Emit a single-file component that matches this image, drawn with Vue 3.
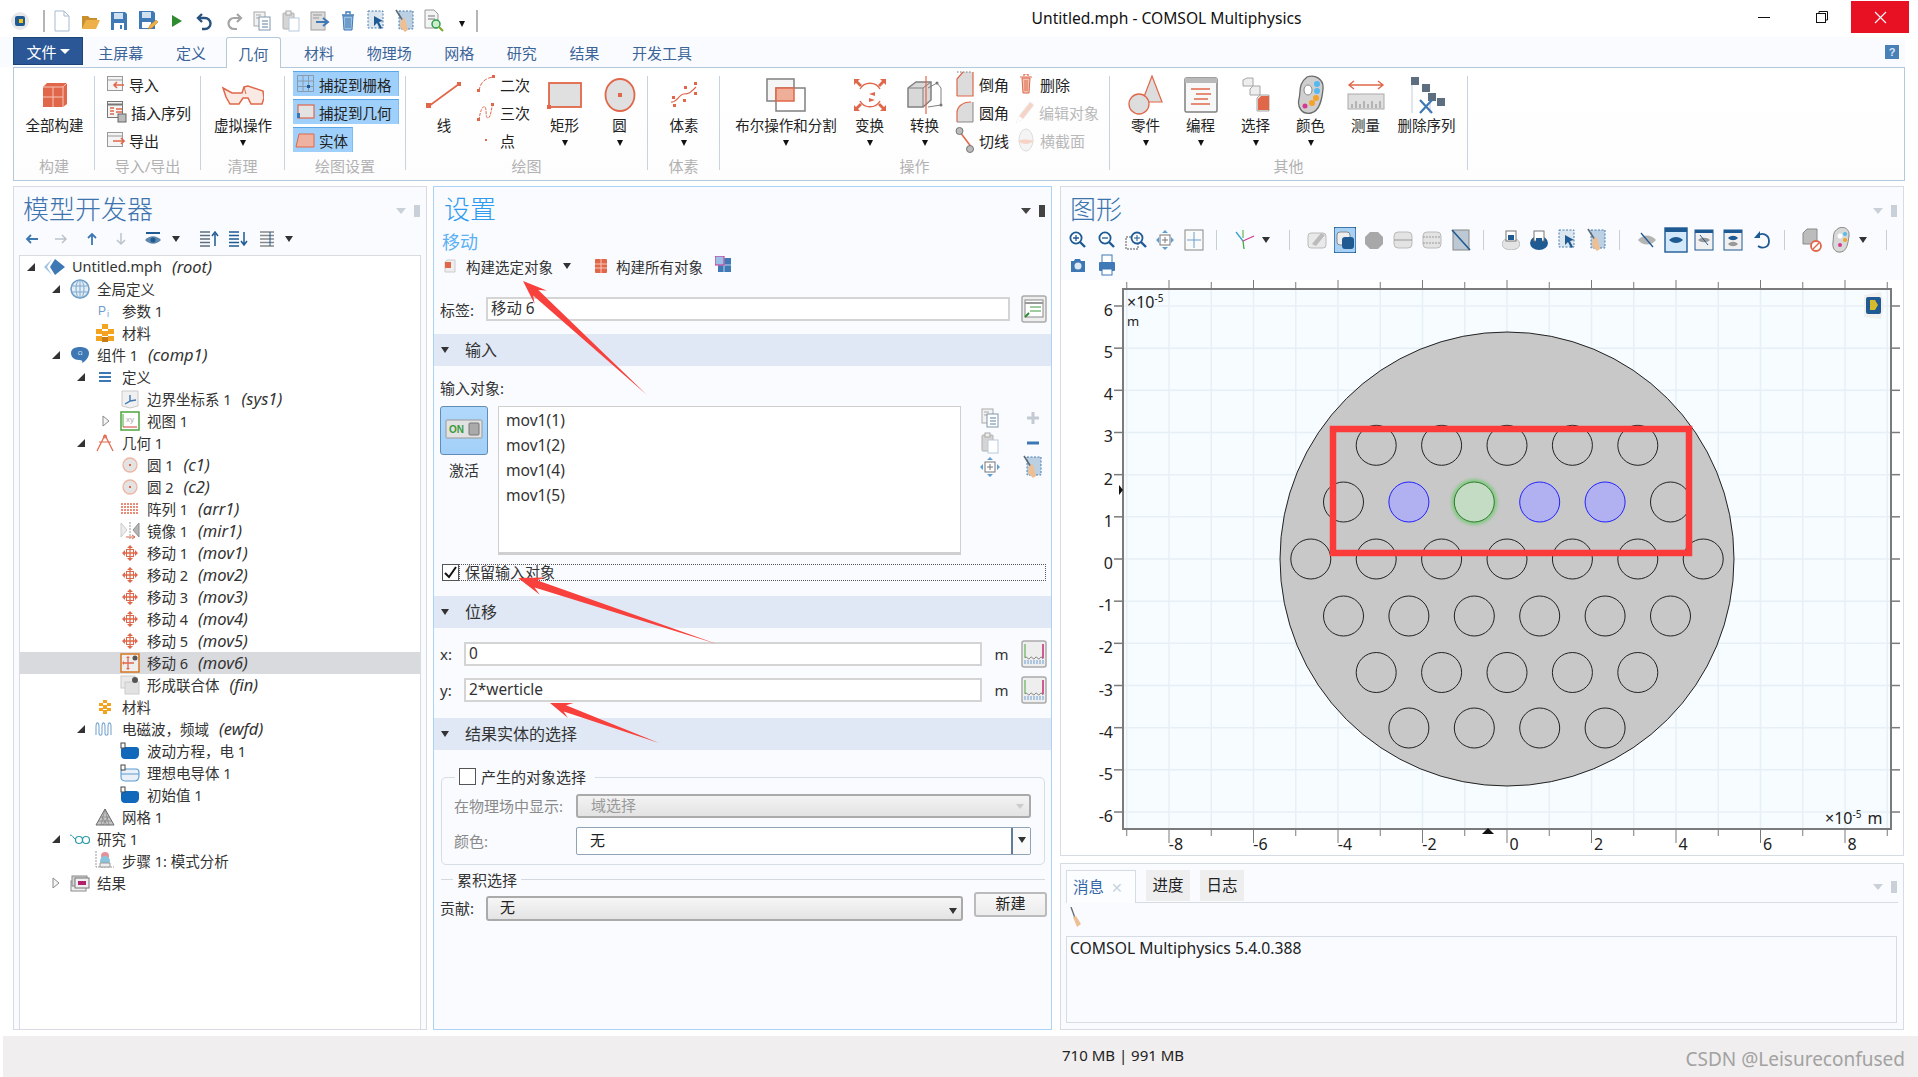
<script setup>
import { h } from 'vue'
const O = '#e0674a', D = '#808080', B = '#3d78b4', N = '#1f5a93'
const mag = (x) => `<circle cx="8" cy="8" r="5.6" fill="#fff" stroke="${N}" stroke-width="1.8"/><path d="M12 12l5 5" stroke="${N}" stroke-width="2.4"/>${x}`
const I = {
  logo: [20, 20, `<ellipse cx="10" cy="10" rx="9" ry="9" fill="#e7e7ea"/><rect x="5" y="5" width="10" height="10" rx="2" fill="#1f5a93"/><rect x="9" y="8" width="4" height="4" fill="#f0c419"/>`],
  new: [16, 22, `<path d="M1 1h9l5 5v15H1z" fill="#fff" stroke="#a7bbd0"/><path d="M10 1v5h5" fill="none" stroke="#a7bbd0"/>`],
  open: [20, 18, `<path d="M1 4h6l2 2h7v3H6l-5 8z" fill="#c98f2c"/><path d="M5 8h14l-4 9H1z" fill="#eeb14a"/>`],
  save: [18, 20, `<path d="M1 1h14l2 2v16H1z" fill="#3f79b6"/><rect x="4" y="2" width="9" height="6" fill="#cfe0f0"/><rect x="4" y="12" width="10" height="7" fill="#fff"/><rect x="10" y="14" width="2" height="4" fill="#3f79b6"/>`],
  saveas: [20, 22, `<path d="M1 1h14l2 2v16H1z" fill="#3f79b6"/><rect x="4" y="2" width="9" height="6" fill="#cfe0f0"/><rect x="4" y="12" width="9" height="6" fill="#fff"/><path d="M10 19l2-4 6-5 2 2-6 6z" fill="#eeb14a" stroke="#b87a1c" stroke-width=".5"/>`],
  play: [12, 14, `<path d="M1 1l10 6-10 6z" fill="#2f8b2f"/>`],
  undo: [18, 20, `<path d="M6 3L2 7l4 4" fill="none" stroke="#28527f" stroke-width="2.4"/><path d="M3 7h6a5.500 5.500 0 0 1 0 11H6" fill="none" stroke="#28527f" stroke-width="2.4"/>`],
  redo: [18, 20, `<path d="M12 3l4 4-4 4" fill="none" stroke="#a5a5a5" stroke-width="2.2"/><path d="M15 7H9a5.500 5.500 0 0 0 0 11h3" fill="none" stroke="#a5a5a5" stroke-width="2.2"/>`],
  copy: [18, 20, `<rect x="1" y="1" width="11" height="14" fill="#f2f2f2" stroke="#a9a9a9"/><path d="M3 4h5M3 7h5" stroke="#a9a9a9"/><rect x="6" y="6" width="11" height="13" fill="#fff" stroke="#7f96ad"/><path d="M9 10h6M9 13h6M9 16h6" stroke="#5d7f9f"/>`],
  paste: [18, 22, `<rect x="1" y="3" width="11" height="16" rx="1" fill="#d5d5d5" stroke="#b0b0b0"/><rect x="4" y="1" width="5" height="4" fill="#eee" stroke="#aaa"/><rect x="7" y="8" width="10" height="13" fill="#fff" stroke="#b9cadb"/>`],
  impdoc: [20, 20, `<rect x="1" y="1" width="14" height="18" fill="#dcdcdc" stroke="#a0a0a0"/><path d="M3 4h9M3 7h6" stroke="#999"/><path d="M6 11h11M13 7l5 4-5 4" fill="none" stroke="#3f79b6" stroke-width="2"/>`],
  trash: [14, 20, `<path d="M1 4h12M5 3V1h4v2" stroke="#3f79b6" stroke-width="1.400" fill="none"/><path d="M2 5h10l-1 14H3z" fill="#9fc1e0" stroke="#3f79b6"/><path d="M5 7v10M7 7v10M9 7v10" stroke="#3f79b6"/>`],
  dsel: [20, 22, `<rect x="1" y="1" width="15" height="17" fill="#dce6ef" stroke="#4a7eb0" stroke-dasharray="2 1.500"/><path d="M7 6l9 5-4 1 3 6-2 1-3-6-3 3z" fill="${N}"/>`],
  broom: [20, 24, `<rect x="4" y="2" width="14" height="18" fill="#bcd0e3" stroke="#4a7eb0" stroke-dasharray="2 1.500"/><path d="M1 1l7 11" stroke="#5d6a76" stroke-width="1.600"/><path d="M6 11l4-2 3 12-3 2-5-5z" fill="#eebf93"/>`],
  find: [20, 24, `<path d="M1 1h9l4 4v14H1z" fill="#f4f4f4" stroke="#999"/><path d="M4 7h7M4 10h7" stroke="#777"/><circle cx="12" cy="15" r="4" fill="#cdeecd" stroke="#2f9b4c" stroke-width="1.500"/><path d="M15 18l4 4" stroke="#79a82c" stroke-width="2.200"/>`],

  build: [26, 26, `<path d="M1 5l4-4h20v21l-4 3H1z" fill="${O}"/><path d="M1 5h20v20M21 5l4-4M1 15h20M11 5v20" stroke="#f6c7b8" fill="none"/>`],
  imp: [18, 16, `<rect x=".5" y=".5" width="15" height="14" fill="#f4f4f4" stroke="#999"/><path d="M1 4h14" stroke="#999"/><path d="M17 9H7M10 6L7 9l3 3" stroke="${O}" stroke-width="1.600" fill="none"/>`],
  ins: [20, 22, `<rect x=".5" y=".5" width="15" height="16" fill="#f4f4f4" stroke="#777"/><path d="M1 3.500h14" stroke="#777" stroke-width="2"/><path d="M3 7h4M3 10h4M3 13h4M9 8h6M9 11h6" stroke="${O}" stroke-width="1.300"/><rect x="11" y="13" width="8" height="8" fill="#bbb" stroke="#666"/>`],
  exp: [18, 16, `<rect x=".5" y=".5" width="15" height="14" fill="#f4f4f4" stroke="#999"/><path d="M1 4h14" stroke="#999"/><path d="M6 9h11M14 6l3 3-3 3" stroke="${O}" stroke-width="1.600" fill="none"/>`],
  virt: [42, 22, `<path d="M1 4l9 5h10l2-6 4-1 15 5 1 7-2 6H29l-3-6h-5l-4 6H8L4 13z" fill="#fbeae4" stroke="${O}" stroke-width="1.500"/><path d="M22 3l2 7" stroke="${O}"/>`],
  sgrid: [18, 18, `<path d="M.5.500h16v16H.5zM6 1v16M11.500 1v16M1 6h16M1 11.500h16" fill="none" stroke="#8a9aaa"/><rect x="10" y="10" width="3" height="3" fill="${N}"/>`],
  sgeo: [18, 16, `<rect x="1" y="1" width="16" height="13" fill="#e3e3e3" stroke="${O}" stroke-width="1.200"/><rect x="0" y="9" width="3" height="5" fill="${B}"/>`],
  solid: [20, 16, `<path d="M1 15L4 2h15v13z" fill="#efb2a0" stroke="${O}"/>`],
  line: [38, 30, `<path d="M4 26L34 4" stroke="${O}" stroke-width="1.600"/><rect x="1" y="23" width="5" height="5" fill="${O}"/><rect x="32" y="2" width="4" height="4" fill="${O}"/>`],
  q2: [18, 18, `<path d="M2 16C3 8 8 3 16 2" fill="none" stroke="${O}" stroke-dasharray="4 1.500"/><rect x="0" y="14" width="3" height="3" fill="${O}"/><rect x="15" y="0" width="3" height="3" fill="${O}"/>`],
  q3: [18, 20, `<path d="M2 18C3 9 6 3 8 5s0 11 3 11 3-10 5-14" fill="none" stroke="${O}" stroke-dasharray="3 1"/><rect x="0" y="16" width="3" height="3" fill="${O}"/><rect x="14" y="1" width="3" height="3" fill="${O}"/>`],
  dot: [4, 4, `<rect x="1" y="1" width="2" height="2" fill="${O}"/>`],
  rect: [36, 28, `<rect x="2" y="2" width="32" height="24" fill="#e0e0e0" stroke="${O}" stroke-width="1.800"/><rect x="0" y="24" width="4" height="4" fill="${O}"/>`],
  circle: [32, 34, `<ellipse cx="16" cy="17" rx="14.500" ry="16" fill="#e0e0e0" stroke="${O}" stroke-width="1.800"/><rect x="14" y="15" width="4" height="4" fill="${O}"/>`],
  voxel: [30, 26, `<path d="M2 20c6 1 8-8 13-8s6-1 12-7" fill="none" stroke="${O}" stroke-width="1.200"/><path d="M3 14h3v3H3zM15 4h3v3h-3zM25 0h3v3h-3zM14 17h3v3h-3zM25 10h3v3h-3zM4 22h3v3H4z" fill="${O}"/>`],
  bool: [40, 34, `<rect x="1" y="1" width="27" height="22" fill="#f5f5f5" stroke="${D}" stroke-width="1.500"/><rect x="10" y="10" width="29" height="23" fill="#fff" stroke="${D}" stroke-width="1.500"/><rect x="10" y="10" width="18" height="13" fill="#efae98" stroke="${O}" stroke-width="1.500"/>`],
  trans: [34, 34, `<path d="M27 11a11.500 11.500 0 0 0-20 0M7 23a11.500 11.500 0 0 0 20 0" fill="none" stroke="${O}" stroke-width="1.400"/><path d="M1 1h6L5 3l4 4-2 2-4-4-2 2zM33 1h-6l2 2-4 4 2 2 4-4 2 2zM1 33v-6l2 2 4-4 2 2-4 4 2 2zM33 33h-6l2-2-4-4 2-2 4 4 2-2z" fill="${O}"/><path d="M16 16l6 2 0-4zM22 22l-6-2 0 4z" fill="${O}"/>`],
  conv: [38, 38, `<path d="M2 12l8-6h15v18l-8 7H2z" fill="#d8d8d8" stroke="${D}" stroke-width="1.500"/><path d="M2 12h15v19M17 12l8-6" stroke="${D}" fill="none"/><path d="M22 12l9-5 4 5v17l-13 2" fill="none" stroke="${D}"/><path d="M20 0v38" stroke="${O}" stroke-width="1.200"/><circle cx="31" cy="7" r="1.500" fill="#777"/><circle cx="35" cy="29" r="1.500" fill="#777"/>`],
  cham: [18, 26, `<path d="M1 8l6-7h10v24H1z" fill="#dcdcdc"/><path d="M1 25V8l6-7M17 1v24H1" fill="none" stroke="${O}" stroke-width="1.200"/><path d="M1 1h14" stroke="#777" stroke-dasharray="1.500"/>`],
  fil: [18, 22, `<path d="M1 21V12C1 6 6 1 15 1h2v20z" fill="#dcdcdc"/><path d="M1 21V12C1 6 6 1 15 1" fill="none" stroke="${O}" stroke-width="1.200"/><path d="M17 1v20H1" stroke="#888" fill="none"/>`],
  tang: [20, 26, `<path d="M5 5l12 16" stroke="${O}" stroke-width="1.500"/><circle cx="4.500" cy="4" r="3.500" fill="#bbb" stroke="#777"/><circle cx="15" cy="22" r="3.500" fill="#bbb" stroke="#777"/>`],
  del: [12, 20, `<path d="M0 3h12M4 2V0h4v2" stroke="${O}" stroke-width="1.200" fill="none"/><path d="M2 4h8l-1 15H3z" fill="#f3c3b5" stroke="${O}"/><path d="M5 6v11M7 6v11" stroke="${O}"/>`],
  edit: [20, 24, `<path d="M1 23l3-7L15 2l4 3L8 19z" fill="#f6d3c7" stroke="#eee"/><path d="M1 23l3-7 4 3z" fill="#fff"/>`],
  cross: [18, 26, `<ellipse cx="9" cy="13" rx="7" ry="11" fill="#f4f4f4" stroke="#ddd"/><path d="M1 14c5-2 9-2 16 0-6 4-11 4-16 0z" fill="#f6d3c7"/>`],
  part: [36, 40, `<path d="M24 1l10 26H14z" fill="#ddd" stroke="${O}" stroke-width="1.200"/><circle cx="11" cy="29" r="10" fill="#ddd" stroke="${O}" stroke-width="1.300"/>`],
  prog: [34, 36, `<rect x="1" y="1" width="32" height="34" rx="1.500" fill="#f8f8f8" stroke="${D}" stroke-width="1.500"/><rect x="1" y="1" width="32" height="5" fill="#b9b9b9"/><path d="M7 12h19M12 17h15M10 22h14M7 27h19" stroke="${O}" stroke-width="1.300"/>`],
  psel: [30, 36, `<path d="M2 3l4-2h6v8H2zM9 12l3-3h7v9H9zM16 21l3-3h9v16H16z" fill="#eee" stroke="#a6a6a6"/><path d="M17 22l3-3h8v14H17z" fill="${O}"/>`],
  pal: [28, 40, `<path d="M10 2c8-3 17 2 16 12s-3 22-12 24S0 32 2 24s-1-15 8-22z" fill="#cfcfcf" stroke="#6b6b6b" stroke-width="1.300"/><ellipse cx="11" cy="15" rx="4" ry="5" fill="#fff" stroke="#888"/><circle cx="20" cy="9" r="3" fill="#55b9ee"/><circle cx="20" cy="16" r="3" fill="#55b9ee"/><circle cx="19" cy="23" r="3" fill="#f3a329"/><circle cx="15" cy="28" r="3" fill="#f3a329"/><circle cx="8" cy="31" r="2.500" fill="#d43b8f"/>`],
  meas: [38, 30, `<path d="M2 5h34M7 1L2 5l5 4M31 1l5 4-5 4" fill="none" stroke="${O}" stroke-width="1.400"/><rect x="1" y="14" width="36" height="15" fill="#dfdfdf" stroke="#aaa"/><path d="M5 24v4M9 21v7M13 24v4M17 21v7M21 24v4M25 21v7M29 24v4M33 21v7" stroke="#888"/>`],
  dseq: [36, 38, `<path d="M2 1h8v8H2zM13 8h8v8h-8zM19 17h8v8h-8zM28 22h8v8h-8z" fill="#5d6e80"/><path d="M3 9v28M21 25v12" stroke="#c5ced6"/><path d="M11 24l12 13M23 24L11 37" stroke="${B}" stroke-width="2.200"/>`],

  back: [14, 10, `<path d="M13 5H3M6 1L2 5l4 4" fill="none" stroke="${B}" stroke-width="1.800"/>`],
  fwd: [14, 10, `<path d="M1 5h10M8 1l4 4-4 4" fill="none" stroke="#bcc3cb" stroke-width="1.500"/>`],
  up: [10, 14, `<path d="M5 13V3M1 6l4-4 4 4" fill="none" stroke="${B}" stroke-width="1.800"/>`],
  down: [10, 14, `<path d="M5 1v10M1 8l4 4 4-4" fill="none" stroke="#bcc3cb" stroke-width="1.500"/>`],
  eye: [18, 14, `<path d="M2 1h14" stroke="${N}" stroke-width="2"/><path d="M1 8c5-5 11-5 16 0-5 5-11 5-16 0z" fill="#5f87ab"/><circle cx="9" cy="8" r="2.500" fill="${N}"/>`],
  lup: [20, 16, `<path d="M1 1h10M1 4.500h10M1 8h10M1 11.500h10M1 15h10" stroke="#5f6f80" stroke-width="1.300"/><path d="M16 15V3M13 5l3-4 3 4" fill="none" stroke="${N}" stroke-width="1.500"/>`],
  ldn: [20, 16, `<path d="M1 1h10M1 4.500h10M1 8h10M1 11.500h10M1 15h10" stroke="${N}" stroke-width="1.300"/><path d="M16 1v12M13 10l3 4 3-4" fill="none" stroke="${N}" stroke-width="1.500"/>`],
  lst: [16, 16, `<path d="M1 1h14M1 4.500h14M1 8h14M1 11.500h14M1 15h14" stroke="#888" stroke-width="1.300"/><path d="M11 1v14" stroke="${N}"/>`],
  arc: [8, 12, `<path d="M1 1l6 5-6 5z" fill="#f4f4f4" stroke="#8a8a8a"/>`],

  proj: [22, 16, `<path d="M8 0L0 8l8 8-5-8z" fill="#9fc3e4"/><path d="M11 0l10 8-10 8-5-8z" fill="${B}"/>`],
  globe: [20, 20, `<circle cx="10" cy="10" r="9" fill="#e3edf6" stroke="#6d9cc5" stroke-width="1.500"/><ellipse cx="10" cy="10" rx="4" ry="9" fill="none" stroke="#7ea9cf"/><path d="M1 7h18M1 13h18M10 1v18" stroke="#7ea9cf"/>`],
  pi: [14, 14, `<text x="0" y="11" font-size="12" fill="#6f9ccb" font-family="Liberation Sans">P</text><text x="9" y="13" font-size="9" fill="#6f9ccb" font-family="Liberation Sans">i</text>`],
  mat: [18, 18, `<path d="M6 0h6v5H6zM0 5h6v5H0zM12 5h6v5h-6zM6 7h6v5H6zM0 12h6v5H0zM12 12h6v5h-6zM6 13h6v5H6z" fill="#f4a31e"/><path d="M6 13h6v5H6z" fill="#c97b14"/>`],
  comp: [18, 16, `<path d="M9 0c5 0 9 2 9 6s-3 8-7 10c1-2 0-3-3-3-5 0-8-3-8-7s4-6 9-6z" fill="${B}"/><text x="7" y="8" font-size="6" fill="#cfe0f0">Ω</text>`],
  defs: [12, 12, `<path d="M0 2h12M0 6h12M0 10h12" stroke="${B}" stroke-width="2"/>`],
  sys: [18, 20, `<path d="M1 2h16v15l-8 2-8-2z" fill="#f0f0f0" stroke="#c9c9c9"/><path d="M4 15l5-3v-6M9 12l6-1" stroke="${B}" stroke-width="1.400" fill="none"/>`],
  view: [20, 20, `<rect x="1" y="1" width="18" height="18" fill="#fff" stroke="#4fa43e" stroke-width="1.500"/><text x="6" y="11" font-size="8" fill="#aaa" font-family="Liberation Sans">xy</text><path d="M3 3v13" stroke="#4fa43e"/><path d="M3 16h14" stroke="#d43a3a"/>`],
  geom: [18, 18, `<path d="M9 1L1 17M9 1l8 16M3 8h12" fill="none" stroke="${O}" stroke-width="1.200"/><circle cx="9" cy="2.500" r="1.500" fill="none" stroke="${O}"/>`],
  circ: [16, 16, `<circle cx="8" cy="8" r="7" fill="#e3e3e3" stroke="#efb4a2" stroke-width="1.300"/><rect x="7" y="7" width="2" height="2" fill="${O}"/>`],
  arr: [18, 12, `<path d="M0 1h18M0 4h18M0 7h18M0 10h18" stroke="${O}" stroke-width="1.500" stroke-dasharray="2 1"/>`],
  mir: [20, 18, `<path d="M1 1l6 7-6 7z" fill="#ececec" stroke="#ccc"/><path d="M19 1l-6 7 6 7z" fill="#b5b5b5" stroke="#8f8f8f"/><path d="M10 0v17" stroke="#999" stroke-dasharray="2 1"/><path d="M6 15h9M12 13l3 2-3 2" stroke="${O}" fill="none"/>`],
  mov: [16, 16, `<path d="M8 1v14M1 8h14" stroke="${O}" stroke-width="1.300"/><path d="M8 0l3 3H5zM8 16l3-3H5zM0 8l3-3v6zM16 8l-3-3v6z" fill="${O}"/><rect x="4.500" y="4.500" width="7" height="7" fill="none" stroke="${O}"/>`],
  movsel: [20, 20, `<rect x="1" y="1" width="18" height="18" fill="#eee" stroke="#d9771f" stroke-width="1.500"/><path d="M8 4v12M3 10h11" stroke="${O}" stroke-width="1.300"/><path d="M8 3l2 2H6zM8 17l2-2H6zM2 10l2-2v4z" fill="${O}"/><circle cx="15" cy="5" r="2.500" fill="#555"/>`],
  fin: [20, 20, `<rect x="1" y="1" width="14" height="12" fill="#eaeaea" stroke="#ccc"/><rect x="5" y="7" width="14" height="12" fill="#e2e2e2" stroke="#ccc"/><circle cx="15" cy="5" r="3" fill="#555"/>`],
  mat2: [14, 14, `<path d="M5 0h4v3H5zM1 3h4v3H1zM9 3h4v3H9zM5 5h4v4H5zM1 8h4v3H1zM9 8h4v3H9zM5 10h4v4H5z" fill="#f4a31e"/>`],
  ewfd: [20, 14, `<path d="M1 13V5c0-6 3-5 3 0v6c0 3 3 3 3 0V5c0-6 3-5 3 0v6c0 3 3 3 3 0V5c0-6 3-5 3 0v8" fill="none" stroke="#7aa6d1" stroke-width="1.100"/>`],
  phys: [20, 18, `<path d="M3 5h13c2 0 3 1 3 3v4c0 3-2 5-5 5H5c-3 0-4-2-4-4V7z" fill="#1268ba"/><rect x="1" y="1" width="4" height="5" fill="#fff" stroke="#444"/>`],
  pec: [20, 18, `<path d="M3 5h13c2 0 3 1 3 3v4c0 3-2 5-5 5H5c-3 0-4-2-4-4V7z" fill="#e9f0f7" stroke="#5b9bd1" stroke-width="1.100"/><path d="M1 10h18" stroke="#5b9bd1"/><rect x="1" y="1" width="4" height="5" fill="#fff" stroke="#444"/>`],
  mesh: [20, 18, `<path d="M10 1L1 17h18z" fill="#c4c4c4" stroke="#6c6c6c"/><path d="M5.500 9h9M3 13h14M10 1l4 16M10 1L6 17M7 9l5 8M13 9l-5 8" stroke="#6c6c6c" stroke-width=".5"/>`],
  study: [20, 12, `<path d="M0 2c3 0 3 3 5 4" fill="none" stroke="#2e9aa8"/><circle cx="9" cy="7" r="3.500" fill="none" stroke="#2e9aa8" stroke-width="1.200"/><circle cx="16" cy="7" r="3.500" fill="none" stroke="#2e9aa8" stroke-width="1.200"/>`],
  step: [20, 20, `<path d="M1 0v16h18" fill="none" stroke="#999" stroke-dasharray="2 1"/><circle cx="10" cy="5" r="4" fill="#e3929a"/><circle cx="10" cy="10" r="5" fill="#8ac3dc"/><path d="M5 12h10v4H5z" fill="#eee" stroke="#999"/>`],
  res: [20, 18, `<rect x="1" y="7" width="15" height="10" fill="#eee" stroke="#8a8a8a"/><rect x="2" y="2" width="15" height="10" fill="#d5d5d5" stroke="#8a8a8a"/><rect x="5" y="4" width="14" height="10" fill="#efefef" stroke="#777"/><rect x="8" y="7" width="8" height="4" fill="#b2226b"/>`],

  sb1: [12, 14, `<path d="M1 3l2-2h8v12H1z" fill="#eee" stroke="#ccc"/><path d="M1 3h6v6H1z" fill="${O}"/>`],
  sb2: [12, 14, `<rect x="0" y="0" width="12" height="14" rx="1" fill="${O}"/><path d="M0 5h12M0 9h12M6 0v14" stroke="#f6c7b8"/>`],
  sb3: [16, 16, `<rect x="3" y="2" width="13" height="14" fill="#3f79b6"/><path d="M3 9h13M9 2v14" stroke="#bcd4ea"/><rect x="0" y="0" width="9" height="9" fill="#9cc1e6" stroke="#d12b93"/>`],
  lbl: [26, 28, `<rect x="1" y="1" width="24" height="26" rx="2" fill="#eee" stroke="#aaa" stroke-width="1.500"/><rect x="4" y="5" width="18" height="17" fill="#fff" stroke="#888"/><path d="M4 8h18" stroke="#999" stroke-width="2"/><path d="M9 12h11M9 16h11" stroke="#3f9a3f"/><path d="M4 22l4-4" stroke="#2f8b2f" stroke-width="2"/>`],
  on: [38, 20, `<rect x="1" y="1" width="36" height="18" rx="1" fill="#e2e2e2" stroke="#999"/><text x="4" y="14" font-size="10" font-weight="700" fill="#3a9a3a" font-family="Liberation Sans">ON</text><rect x="24" y="4" width="10" height="12" rx="1" fill="#aaa" stroke="#777"/>`],
  plus: [16, 16, `<path d="M8 2v12M2 8h12" stroke="#c3cad3" stroke-width="3"/>`],
  minus: [16, 8, `<path d="M2 4h12" stroke="${B}" stroke-width="3"/>`],
  zoomsel: [20, 20, `<rect x="5" y="5" width="10" height="10" fill="#fff" stroke="#777"/><path d="M10 7v6M7 10h6" stroke="#777"/><path d="M10 0l3 3H7zM10 20l3-3H7zM0 10l3-3v6zM20 10l-3-3v6z" fill="#5f9ed1"/>`],
  ramp: [26, 28, `<rect x="1" y="1" width="24" height="26" rx="2" fill="#eee" stroke="#aaa" stroke-width="1.500"/><path d="M4 18c2-3 3 3 5 0s3 3 5 0 3 3 5 0 3 3 3 0" fill="none" stroke="#777"/><path d="M4 4v14" stroke="#4fa43e"/><path d="M22 4v14" stroke="#c22d6e" stroke-width="1.500"/><path d="M3 21h20M3 23h20" stroke="#6d9fd1" stroke-dasharray="2 1"/>`],

  zi: [20, 20, mag(`<path d="M5 8h6M8 5v6" stroke="${N}" stroke-width="1.300"/>`)],
  zo: [20, 20, mag(`<path d="M5 8h6" stroke="${N}" stroke-width="1.300"/>`)],
  zb: [22, 20, `<rect x="1" y="7" width="12" height="12" fill="none" stroke="#555" stroke-dasharray="2 1"/><circle cx="12" cy="8" r="5.500" fill="#fff" stroke="${N}" stroke-width="1.800"/><path d="M16 12l5 5" stroke="${N}" stroke-width="2.400"/><path d="M9 8h6M12 5v6" stroke="${N}"/>`],
  zx: [20, 22, `<rect x="5" y="6" width="10" height="10" fill="#fff" stroke="#777"/><path d="M10 8v6M7 11h6" stroke="#777"/><path d="M10 1l3 3H7zM10 21l3-3H7zM1 11l3-3v6zM19 11l-3-3v6z" fill="#5f9ed1"/>`],
  fit: [20, 22, `<rect x="1" y="1" width="18" height="20" fill="#fafafa" stroke="#888"/><path d="M10 3v16M3 11h14" stroke="#6d9fd1"/>`],
  axes: [22, 20, `<path d="M10 11L3 2" stroke="#3ba3c5" stroke-width="1.300"/><path d="M10 11l1 8" stroke="#3fa83f" stroke-width="1.300"/><path d="M10 11l11-5" stroke="#d43b8f" stroke-width="1.300"/><path d="M10 0v8" stroke="#3fa83f"/>`],
  gv1: [20, 20, `<rect x="1" y="3" width="18" height="15" rx="3" fill="#e9e9e9" stroke="#bbb"/><path d="M5 14l9-11 4 2-9 11z" fill="#bbb"/>`],
  gv2: [22, 26, `<rect x="0" y="0" width="22" height="26" rx="2" fill="#a7d0f5" stroke="${N}" stroke-width="1.300"/><rect x="3" y="5" width="13" height="13" rx="3" fill="#eee" stroke="#888"/><rect x="8" y="10" width="12" height="12" rx="3" fill="${N}"/>`],
  gv3: [20, 20, `<path d="M6 2h8l5 5v7l-5 5H6l-5-5V7z" fill="#a8a8a8"/>`],
  gv4: [20, 20, `<rect x="1" y="2" width="18" height="16" rx="4" fill="#e3e3e3" stroke="#bbb"/><path d="M1 10h18" stroke="#999"/>`],
  gv5: [20, 20, `<rect x="1" y="2" width="18" height="16" rx="4" fill="#e3e3e3" stroke="#bbb"/><path d="M1 7h18M1 13h18" stroke="#999" stroke-dasharray="2 1"/>`],
  gv6: [20, 22, `<rect x="2" y="1" width="16" height="20" fill="#bcc8d3" stroke="#888"/><path d="M1 1l18 20" stroke="${N}" stroke-width="1.600"/>`],
  ps1: [18, 20, `<ellipse cx="9" cy="14" rx="9" ry="6" fill="#e3e3e3" stroke="#bbb"/><rect x="4" y="1" width="10" height="10" fill="#fff" stroke="#777"/><rect x="6" y="5" width="6" height="5" fill="${N}"/>`],
  ps2: [18, 20, `<ellipse cx="9" cy="13" rx="9" ry="7" fill="${N}"/><rect x="4" y="1" width="10" height="10" fill="#fff" stroke="#777"/><rect x="6" y="8" width="6" height="4" fill="${N}"/>`],
  hid1: [20, 18, `<path d="M1 9c5-6 13-6 18 0-5 6-13 6-18 0z" fill="#b4b4b4"/><path d="M4 2l12 14" stroke="${N}" stroke-width="1.300"/>`],
  hid2: [24, 26, `<rect x="1" y="1" width="22" height="24" fill="#d4e8fb" stroke="${N}" stroke-width="1.400"/><rect x="1" y="1" width="22" height="4" fill="${N}"/><path d="M5 13c4-4 10-4 14 0-4 4-10 4-14 0z" fill="${N}"/>`],
  hid3: [20, 22, `<rect x="1" y="1" width="18" height="20" fill="#f1f1f1" stroke="${N}"/><rect x="1" y="1" width="18" height="3" fill="${N}"/><path d="M4 11c3-3 9-3 12 0-3 3-9 3-12 0z" fill="#999"/><path d="M6 6l8 10" stroke="${N}"/>`],
  hid4: [20, 22, `<rect x="1" y="1" width="18" height="20" fill="#f1f1f1" stroke="${N}"/><rect x="1" y="1" width="18" height="3" fill="${N}"/><path d="M5 9c3-3 7-3 10 0-3 3-7 3-10 0z" fill="${N}"/><path d="M5 15c3-3 7-3 10 0-3 3-7 3-10 0z" fill="#999"/>`],
  reset: [16, 20, `<path d="M4 6c3-4 11-2 11 5s-7 8-11 5" fill="none" stroke="${N}" stroke-width="1.800"/><path d="M6 1v7H0z" fill="${N}"/>`],
  nosc: [20, 24, `<path d="M1 5l4-4h10v15H1z" fill="#bcbcbc" stroke="#8a8a8a"/><circle cx="14" cy="18" r="5" fill="#fff" stroke="${O}" stroke-width="1.800"/><path d="M11 21l6-6" stroke="${O}" stroke-width="1.500"/>`],
  pal2: [18, 26, `<path d="M7 1c5-2 11 1 10 8s-2 15-8 16S0 21 1 15 0 5 7 1z" fill="#d8d8d8" stroke="#888"/><circle cx="8" cy="9" r="2.500" fill="#fff"/><circle cx="13" cy="7" r="2" fill="#55b9ee"/><circle cx="13" cy="13" r="2" fill="#f3a329"/><circle cx="8" cy="18" r="2" fill="#d43b8f"/>`],
  cam: [16, 16, `<path d="M1 4h3l1-2h5l1 2h4v11H1z" fill="${B}"/><circle cx="8" cy="9" r="3.500" fill="#dce8f3"/>`],
  prt: [18, 22, `<rect x="4" y="1" width="10" height="8" fill="#fff" stroke="#3f79b6"/><rect x="1" y="8" width="16" height="9" rx="1" fill="#3f79b6"/><rect x="4" y="15" width="10" height="6" fill="#fff" stroke="#3f79b6"/>`],
  logo2: [24, 28, `<path d="M3 3l17-3 3 14-3 13-17-2z" fill="#f0f0f0"/><rect x="5" y="5" width="15" height="17" rx="2" fill="${N}"/><path d="M9 8h5l3 5-3 5H9z" fill="#d8bb2a"/>`],
  lilbroom: [14, 20, `<path d="M2 0l4 11" stroke="#5d6a76" stroke-width="1.300"/><path d="M4 10l3-1 5 8-4 3z" fill="#eebf93"/>`]
}
const Ic = (p) => {
  const d = I[p.n]
  return h('svg', { width: d[0], height: d[1], viewBox: `0 0 ${d[0]} ${d[1]}`, innerHTML: d[2], class: 'ic' })
}
Ic.props = ['n']

const quick = ['new', 'open', 'save', 'saveas', 'play', 'undo', 'redo', 'copy', 'paste', 'impdoc', 'trash', 'dsel', 'broom', 'find']
const tabs = ['主屏幕', '定义', '几何', '材料', '物理场', '网格', '研究', '结果', '开发工具']
const tree = [
  [0, 1, 'proj', 'Untitled.mph', 'root'], [1, 1, 'globe', '全局定义'], [2, 0, 'pi', '参数 1'], [2, 0, 'mat', '材料'],
  [1, 1, 'comp', '组件 1', 'comp1'], [2, 1, 'defs', '定义'], [3, 0, 'sys', '边界坐标系 1', 'sys1'], [3, 2, 'view', '视图 1'],
  [2, 1, 'geom', '几何 1'], [3, 0, 'circ', '圆 1', 'c1'], [3, 0, 'circ', '圆 2', 'c2'], [3, 0, 'arr', '阵列 1', 'arr1'],
  [3, 0, 'mir', '镜像 1', 'mir1'], [3, 0, 'mov', '移动 1', 'mov1'], [3, 0, 'mov', '移动 2', 'mov2'], [3, 0, 'mov', '移动 3', 'mov3'],
  [3, 0, 'mov', '移动 4', 'mov4'], [3, 0, 'mov', '移动 5', 'mov5'], [3, 0, 'movsel', '移动 6', 'mov6', true], [3, 0, 'fin', '形成联合体', 'fin'],
  [2, 0, 'mat2', '材料'], [2, 1, 'ewfd', '电磁波，频域', 'ewfd'], [3, 0, 'phys', '波动方程，电 1'], [3, 0, 'pec', '理想电导体 1'],
  [3, 0, 'phys', '初始值 1'], [2, 0, 'mesh', '网格 1'], [1, 1, 'study', '研究 1'], [2, 0, 'step', '步骤 1: 模式分析'], [1, 2, 'res', '结果']
].map(([lv, arrow, icon, text, tag, sel]) => ({ lv, arrow, icon, text, tag, sel }))
const objects = ['mov1(1)', 'mov1(2)', 'mov1(4)', 'mov1(5)']

const tb1 = ['zi', 'zo', 'zb', 'zx', 'fit']
const tb2 = ['gv1', 'gv2', 'gv3', 'gv4', 'gv5', 'gv6']
const tb3 = ['ps1', 'ps2', 'dsel', 'broom']
const tb4 = ['hid1', 'hid2', 'hid3', 'hid4', 'reset']

/* plot: full-window coordinates, mapped through the svg viewBox */
const ux = 42.25, uy = 42.17, cx = 1507, cy = 558
const pl = { l: 1123, r: 1891, t: 288, b: 828 }
const gridX = Array.from({ length: 19 }, (_, i) => i - 9).map((v) => ({ v, x: cx + v * ux }))
const gridY = Array.from({ length: 13 }, (_, i) => i - 6).map((v) => ({ v, y: cy - v * uy }))
const ROWS = [[444.3, 5], [501, 6], [558, 7], [615, 6], [671.5, 5], [727, 4]]
const DX = 65.4
const holes = []
ROWS.forEach(([y, n]) => {
  for (let i = 0; i < n; i++) holes.push({ x: 1507 + (i - (n - 1) / 2) * DX, y, k: '' })
})
holes[6].k = 'blue'; holes[7].k = 'green'; holes[8].k = 'blue'; holes[9].k = 'blue'

function arrow(tx, ty, bx, by, hl, hw) {
  const len = Math.hypot(bx - tx, by - ty)
  const dx = (bx - tx) / len, dy = (by - ty) / len, nx = -dy, ny = dx
  const pt = (a, b) => `${(tx + dx * a + nx * b).toFixed(1)},${(ty + dy * a + ny * b).toFixed(1)}`
  return [pt(0, 0), pt(hl, hw), pt(hl * 0.72, hw * 0.42), `${bx},${by}`, pt(hl * 0.72, -hw * 0.42), pt(hl, -hw)].join(' ')
}
const arrows = [arrow(523, 281, 647, 395, 24, 9), arrow(518, 578, 717, 644, 26, 9), arrow(550, 703, 659, 743, 22, 8)]
</script>

<template>
  <div class="app">
    <header class="titlebar">
      <div class="qa">
        <span class="qa-logo"><Ic n="logo" /></span>
        <i class="qa-sep"></i>
        <span v-for="q in quick" :key="q" class="qa-cell"><Ic :n="q" /></span>
        <span class="tri-s qa-caret"></span>
        <i class="qa-sep qa-sep2"></i>
      </div>
      <div class="title">Untitled.mph - COMSOL Multiphysics</div>
      <div class="winbtns">
        <span class="wb"><i class="wmin"></i></span>
        <span class="wb"><svg width="12" height="12" viewBox="0 0 12 12"><path d="M3 2.500V.500h8.500V9H9.500" fill="none" stroke="#111"/><rect x=".5" y="2.500" width="9" height="9" fill="#fff" stroke="#111"/></svg></span>
        <span class="wb wclose"><svg width="13" height="13" viewBox="0 0 13 13"><path d="M1 1l11 11M12 1L1 12" stroke="#fff" stroke-width="1.100"/></svg></span>
      </div>
    </header>

    <nav class="tabrow">
      <div class="filebtn">文件<span class="tri-w"></span></div>
      <div v-for="t in tabs" :key="t" class="tab" :class="{ on: t === '几何' }">{{ t }}</div>
      <div class="help">?</div>
    </nav>

    <section class="ribbon">
      <div class="rg g1">
        <div class="rb">
          <div class="big w82"><span class="bi"><Ic n="build" /></span><span>全部构建</span></div>
        </div>
        <div class="gl">构建</div>
      </div>
      <div class="rg g2">
        <div class="rb col">
          <div class="sm"><Ic n="imp" />导入</div>
          <div class="sm"><Ic n="ins" />插入序列</div>
          <div class="sm"><Ic n="exp" />导出</div>
        </div>
        <div class="gl">导入/导出</div>
      </div>
      <div class="rg g3">
        <div class="rb">
          <div class="big w84"><span class="bi"><Ic n="virt" /></span><span>虚拟操作</span><i class="tri-s"></i></div>
        </div>
        <div class="gl">清理</div>
      </div>
      <div class="rg g4">
        <div class="rb col tog">
          <div class="tg"><Ic n="sgrid" />捕捉到栅格</div>
          <div class="tg"><Ic n="sgeo" />捕捉到几何</div>
          <div class="tg short"><Ic n="solid" />实体</div>
        </div>
        <div class="gl">绘图设置</div>
      </div>
      <div class="rg g5">
        <div class="rb">
          <div class="big w76"><span class="bi"><Ic n="line" /></span><span>线</span></div>
          <div class="col c-small">
            <div class="sm"><span class="si"><Ic n="q2" /></span>二次</div>
            <div class="sm"><span class="si"><Ic n="q3" /></span>三次</div>
            <div class="sm"><span class="si"><Ic n="dot" /></span>点</div>
          </div>
          <div class="big w54"><span class="bi"><Ic n="rect" /></span><span>矩形</span><i class="tri-s"></i></div>
          <div class="big w54"><span class="bi"><Ic n="circle" /></span><span>圆</span><i class="tri-s"></i></div>
        </div>
        <div class="gl">绘图</div>
      </div>
      <div class="rg g6">
        <div class="rb">
          <div class="big w72"><span class="bi"><Ic n="voxel" /></span><span>体素</span><i class="tri-s"></i></div>
        </div>
        <div class="gl">体素</div>
      </div>
      <div class="rg g7">
        <div class="rb">
          <div class="big w112 bool-item"><span class="bi"><Ic n="bool" /></span><span>布尔操作和分割</span><i class="tri-s"></i></div>
          <div class="big w54"><span class="bi"><Ic n="trans" /></span><span>变换</span><i class="tri-s"></i></div>
          <div class="big w54"><span class="bi"><Ic n="conv" /></span><span>转换</span><i class="tri-s"></i></div>
          <div class="col c-ops">
            <div class="sm"><span class="si"><Ic n="cham" /></span>倒角</div>
            <div class="sm"><span class="si"><Ic n="fil" /></span>圆角</div>
            <div class="sm"><span class="si"><Ic n="tang" /></span>切线</div>
          </div>
          <div class="col c-ops2">
            <div class="sm"><span class="si"><Ic n="del" /></span>删除</div>
            <div class="sm dis"><span class="si"><Ic n="edit" /></span>编辑对象</div>
            <div class="sm dis"><span class="si"><Ic n="cross" /></span>横截面</div>
          </div>
        </div>
        <div class="gl">操作</div>
      </div>
      <div class="rg g8">
        <div class="rb">
          <div class="big w55"><span class="bi"><Ic n="part" /></span><span>零件</span><i class="tri-s"></i></div>
          <div class="big w55"><span class="bi"><Ic n="prog" /></span><span>编程</span><i class="tri-s"></i></div>
          <div class="big w55"><span class="bi"><Ic n="psel" /></span><span>选择</span><i class="tri-s"></i></div>
          <div class="big w55"><span class="bi"><Ic n="pal" /></span><span>颜色</span><i class="tri-s"></i></div>
          <div class="big w55"><span class="bi"><Ic n="meas" /></span><span>测量</span></div>
          <div class="big w67"><span class="bi"><Ic n="dseq" /></span><span>删除序列</span></div>
        </div>
        <div class="gl">其他</div>
      </div>
    </section>

    <main class="panels">
      <section class="panel left">
        <div class="ph"><h2 class="pt">模型开发器</h2><span class="pa"><i class="tri-p"></i><i class="pin"></i></span></div>
        <div class="ltb">
          <Ic n="back" class="m1" /><Ic n="fwd" class="m2" /><Ic n="up" class="m3" /><Ic n="down" class="m4" /><Ic n="eye" class="m5" /><i class="tri-d m6"></i><Ic n="lup" class="m7" /><Ic n="ldn" class="m8" /><Ic n="lst" class="m9" /><i class="tri-d m10"></i>
        </div>
        <div class="tree">
          <div v-for="(r, i) in tree" :key="i" class="trow" :class="{ sel: r.sel }" :style="{ paddingLeft: 6 + r.lv * 25 + 'px' }">
            <span class="ar"><i v-if="r.arrow === 1" class="ar-open"></i><Ic v-if="r.arrow === 2" n="arc" /></span>
            <span class="ti"><Ic :n="r.icon" /></span>
            <span class="tx">{{ r.text }}</span>
            <em v-if="r.tag" class="tg-i">({{ r.tag }})</em>
          </div>
        </div>
      </section>

      <section class="panel mid">
        <div class="ph"><h2 class="pt act">设置</h2><span class="pa dark"><i class="tri-p"></i><i class="pin"></i></span></div>
        <div class="sub">移动</div>
        <div class="stb">
          <Ic n="sb1" /><span class="stb-t1">构建选定对象</span><i class="tri-d"></i>
          <Ic n="sb2" class="s2" /><span class="stb-t2">构建所有对象</span><Ic n="sb3" class="s3" />
        </div>
        <div class="frow lblrow">
          <label class="lab l46">标签:</label>
          <div class="inp i524">移动 6</div>
          <Ic n="lbl" class="sq" />
        </div>
        <div class="sec s1"><i class="tri-d"></i><span>输入</span></div>
        <div class="lab line">输入对象:</div>
        <div class="listrow">
          <div class="actcol">
            <div class="onbtn"><Ic n="on" /></div>
            <div class="lab c">激活</div>
          </div>
          <div class="listbox"><div v-for="o in objects" :key="o" class="obj">{{ o }}</div></div>
          <div class="sidebtns">
            <Ic n="copy" /><Ic n="plus" /><Ic n="paste" /><Ic n="minus" /><Ic n="zoomsel" /><Ic n="broom" />
          </div>
        </div>
        <div class="chkrow">
          <span class="chk on"><svg width="13" height="13" viewBox="0 0 13 13"><path d="M1 7l4 4 7-10" fill="none" stroke="#111" stroke-width="2"/></svg></span>
          <span class="chktext">保留输入对象</span>
        </div>
        <div class="sec s2s"><i class="tri-d"></i><span>位移</span></div>
        <div class="frow xr">
          <label class="lab l24">x:</label><div class="inp i518">0</div><span class="unit">m</span><Ic n="ramp" class="sq" />
        </div>
        <div class="frow yr">
          <label class="lab l24">y:</label><div class="inp i518">2*werticle</div><span class="unit">m</span><Ic n="ramp" class="sq" />
        </div>
        <div class="sec s3s"><i class="tri-d"></i><span>结果实体的选择</span></div>
        <div class="gbox">
          <div class="legend"><span class="chk"></span><span>产生的对象选择</span></div>
          <div class="grow"><span class="glab">在物理场中显示:</span><div class="gsel">域选择<i class="tri-g"></i></div></div>
          <div class="grow g2r"><span class="glab">颜色:</span><div class="gcombo"><span>无</span><b><i class="tri-d"></i></b></div></div>
        </div>
        <div class="cum"><i></i><span>累积选择</span><i class="grow1"></i></div>
        <div class="frow contrib">
          <label class="lab l46">贡献:</label>
          <div class="csel">无<i class="tri-d"></i></div>
          <div class="newbtn">新建</div>
        </div>
      </section>

      <div class="rcol">
        <section class="panel gfx">
          <div class="ph"><h2 class="pt">图形</h2><span class="pa"><i class="tri-p"></i><i class="pin"></i></span></div>
          <div class="gtb">
            <span v-for="t in tb1" :key="t" class="gc"><Ic :n="t" /></span>
            <i class="gs"></i>
            <span class="gc"><Ic n="axes" /></span><i class="tri-d gcar"></i>
            <i class="gs"></i>
            <span v-for="t in tb2" :key="t" class="gc"><Ic :n="t" /></span>
            <i class="gs"></i>
            <span v-for="t in tb3" :key="t" class="gc"><Ic :n="t" /></span>
            <i class="gs"></i>
            <span v-for="t in tb4" :key="t" class="gc"><Ic :n="t" /></span>
            <i class="gs"></i>
            <span class="gc"><Ic n="nosc" /></span><span class="gc"><Ic n="pal2" /></span><i class="tri-d gcar"></i>
            <i class="gs"></i>
          </div>
          <div class="gtb second"><span class="gc"><Ic n="cam" /></span><span class="gc"><Ic n="prt" /></span></div>
          <svg class="plot" width="843" height="576" viewBox="1061 279 843 576">
            <rect :x="pl.l" :y="pl.t" :width="pl.r - pl.l" :height="pl.b - pl.t" fill="#f6fcff" />
            <g stroke="#e7f0f6" stroke-width="1.500">
              <line v-for="g in gridX" :key="'gx' + g.v" :x1="g.x" :y1="pl.t" :x2="g.x" :y2="pl.b" />
              <line v-for="g in gridY" :key="'gy' + g.v" :x1="pl.l" :y1="g.y" :x2="pl.r" :y2="g.y" />
            </g>
            <circle :cx="cx" :cy="cy" r="227" fill="#c8c8c8" stroke="#222" stroke-width="1" />
            <template v-for="(c, i) in holes" :key="i">
              <circle v-if="c.k === 'green'" class="glow" :cx="c.x" :cy="c.y" r="23" fill="#86c986" />
              <circle :cx="c.x" :cy="c.y" r="20" :fill="c.k === 'blue' ? '#b1b1f2' : c.k === 'green' ? '#c4dcc4' : 'none'" :stroke="c.k === 'blue' ? '#2222ff' : c.k === 'green' ? '#2c7a2c' : '#222'" stroke-width="1" />
            </template>
            <g stroke="#7b7b7b">
              <g v-for="g in gridX" :key="'tx' + g.v">
                <line v-if="g.x > pl.l && g.x < pl.r" :x1="g.x" :x2="g.x" :y1="pl.t" :y2="pl.t - (g.v % 2 === 0 ? 14 : 7)" />
                <line v-if="g.x > pl.l && g.x < pl.r" :x1="g.x" :x2="g.x" :y1="pl.b" :y2="pl.b + (g.v % 2 === 0 ? 14 : 7)" />
              </g>
              <g v-for="g in gridY" :key="'ty' + g.v" stroke-width="1.500">
                <line :x1="pl.l" :x2="pl.l - 9" :y1="g.y" :y2="g.y" />
                <line :x1="pl.r" :x2="pl.r + 9" :y1="g.y" :y2="g.y" />
              </g>
            </g>
            <rect :x="pl.l" :y="pl.t" :width="pl.r - pl.l" :height="pl.b - pl.t" fill="none" stroke="#7b7b7b" stroke-width="2" />
            <g class="axt">
              <template v-for="g in gridX" :key="'lx' + g.v">
                <text v-if="g.v % 2 === 0 && g.x > pl.l && g.x < pl.r" :x="g.x + 7" :y="pl.b + 21" text-anchor="middle">{{ g.v }}</text>
              </template>
              <text v-for="g in gridY" :key="'ly' + g.v" :x="1113" :y="g.y + 10" text-anchor="end">{{ g.v }}</text>
              <text x="1127" y="307">×10<tspan font-size="10" dy="-6">-5</tspan></text>
              <text x="1127" y="325" font-size="13">m</text>
              <text x="1825" y="823">×10<tspan font-size="10" dy="-6">-5</tspan><tspan dy="6" dx="6">m</tspan></text>
            </g>
            <path d="M1482 833l6-6 6 6z" fill="#111" />
            <path d="M1119 484l4 5-4 5z" fill="#111" />
          </svg>
          <span class="logo-c"><Ic n="logo2" /></span>
        </section>
        <section class="panel msg">
          <div class="mtabs">
            <div class="mt on">消息<span class="x">✕</span></div>
            <div class="mt">进度</div>
            <div class="mt">日志</div>
            <span class="pa mpa"><i class="tri-p"></i><i class="pin"></i></span>
          </div>
          <div class="mtool"><Ic n="lilbroom" /></div>
          <div class="mbox">COMSOL Multiphysics 5.4.0.388</div>
        </section>
      </div>
    </main>

    <footer class="status">
      <span class="mem">710 MB | 991 MB</span>
      <span class="wm">CSDN @Leisureconfused</span>
    </footer>

    <svg class="overlay" width="1918" height="1077" viewBox="0 0 1918 1077">
      <rect x="1333" y="429" width="356" height="124" fill="none" stroke="#fb3a3a" stroke-width="6.500" />
      <polygon v-for="(a, i) in arrows" :key="i" :points="a" fill="#f8403c" />
    </svg>
  </div>
</template>

<style>
html, body { margin: 0; background: #fff; }
</style>

<style scoped>
.app {
  position: relative; width: 1918px; height: 1077px; overflow: hidden; background: #fff;
  display: flex; flex-direction: column;
  font-family: "Noto Sans", "Noto Sans CJK SC", sans-serif; font-size: 15px; color: #333;
}
.ic { display: block; flex: none; }
i { font-style: normal; display: block; }

.titlebar { height: 37px; flex: none; display: flex; align-items: center; position: relative; }
.qa { display: flex; align-items: center; height: 37px; padding-left: 10px; padding-top: 5px; box-sizing: border-box; }
.qa-logo { width: 21px; }
.qa-sep { width: 2px; height: 22px; background: #b5b5b5; margin: 0 3px 0 12px; }
.qa-sep2 { margin: 0 0 0 11px; }
.qa-cell { width: 28.6px; display: flex; justify-content: center; }
.qa-caret { margin-left: 11px; margin-top: 0; }
.title { position: absolute; left: 1001px; top: 7px; width: 331px; text-align: center; font-size: 15.6px; color: #111; white-space: nowrap; }
.winbtns { margin-left: auto; display: flex; align-self: flex-start; margin-top: 1px; margin-right: 9px; }
.wb { width: 58px; height: 32px; display: flex; align-items: center; justify-content: center; }
.wmin { width: 12px; height: 1px; background: #111; }
.wclose { background: #e81123; }

.tabrow { height: 30px; flex: none; display: flex; background: #f9fbff; width: 1905px; padding-left: 13px; box-sizing: border-box; position: relative; }
.filebtn { width: 70px; height: 28px; background: #2b5797; border: 1px solid #1d4479; box-sizing: border-box; color: #fff; display: flex; align-items: center; justify-content: center; gap: 3px; font-size: 15px; }
.tri-w { width: 0; height: 0; border: 5px solid transparent; border-top-color: #fff; border-bottom: 0; }
.tab { font-size: 15px; color: #3b6498; text-align: center; line-height: 33px; height: 30px; padding: 0 16.3px; box-sizing: border-box; white-space: nowrap; }
.tab:nth-child(2) { margin-left: -1px; }
.tab.on { height: 31px; width: 55px; padding: 0; background: #fff; border: 1px solid #b5c9dc; border-bottom: 0; border-radius: 3px 3px 0 0; color: #3b6498; position: relative; z-index: 2; line-height: 32px; margin: 0 7px 0 3.5px; }
.help { position: absolute; left: 1885px; top: 8px; width: 14px; height: 14px; background: #4a80b8; color: #d9e6f2; font: 700 11px/14px "Liberation Sans", sans-serif; text-align: center; }

.ribbon { height: 114px; flex: none; width: 1892px; margin-left: 13px; box-sizing: border-box; border: 1px solid #b5c9dc; background: linear-gradient(#fff, #fdfdfe); display: flex; align-items: flex-start; padding-top: 8px; }
.rg { height: 94px; display: flex; flex-direction: column; border-right: 1px solid #c6d4e1; box-sizing: border-box; position: relative; flex: none; }
.g1 { width: 81px; } .g2 { width: 106px; } .g3 { width: 84px; } .g4 { width: 121px; } .g5 { width: 242px; } .g6 { width: 72px; } .g7 { width: 390px; } .g8 { width: 358px; padding-left: 8px; }
.rb { flex: 1; display: flex; min-height: 0; }
.rb.col, .col { flex-direction: column; display: flex; }
.gl { position: absolute; left: 0; right: 0; top: 80px; text-align: center; font-size: 15px; color: #b2b2b2; line-height: 20px; }
.big { display: flex; flex-direction: column; align-items: center; flex: none; color: #222; font-size: 14.5px; white-space: nowrap; line-height: 20px; }
.bi { height: 41px; margin-top: -2px; display: flex; align-items: center; justify-content: center; }
.w82 { width: 81px; } .w84 { width: 84px; } .w76 { width: 76px; } .w54 { width: 55px; } .w72 { width: 72px; } .w55 { width: 55px; } .w67 { width: 67px; } .w112 { width: 112px; }
.bool-item { margin-left: 10px; }
.tri-s { display: block; width: 0; height: 0; border: 3.5px solid transparent; border-top: 6px solid #111; border-bottom: 0; margin-top: 5px; }
.sm { display: flex; align-items: center; height: 28px; gap: 4px; font-size: 15px; color: #222; white-space: nowrap; }
.g2 .rb { padding: 0 0 0 12px; margin-top: -6px; }
.c-small { margin-left: -7px; margin-top: -6px; width: 64px; }
.si { width: 21px; display: flex; justify-content: center; }
.c-ops { margin-left: 2px; width: 63px; margin-top: -6px; }
.c-ops2 { width: 80px; margin-top: -6px; margin-left: -2px; }
.dis { color: #b9b9b9; }
.g5 .w54:nth-child(3) { margin-left: 0; }
.tog { padding: 0 0 0 8px; gap: 3px; margin-top: -5px; }
.tg { display: flex; align-items: center; gap: 4px; height: 25px; width: 106px; box-sizing: border-box; padding-left: 4px; background: #9fd0fb; border-top: 1px solid #5aa6e6; border-right: 1px solid #7ebcf2; font-size: 14.5px; color: #222; white-space: nowrap; }
.tg.short { width: 60px; padding-left: 2px; }

.panels { display: flex; gap: 6px; margin: 5px 0 0 13px; height: 844px; flex: none; }
.panel { border: 1px solid #d6dbe4; background: #f9fbff; box-sizing: border-box; position: relative; }
.left { width: 414px; display: flex; flex-direction: column; }
.mid { width: 619px; border-color: #aad3f6; }
.rcol { width: 844px; margin-left: 2px; display: flex; flex-direction: column; gap: 7px; }
.ph { height: 43px; flex: none; display: flex; align-items: flex-start; position: relative; }
.pt { margin: 3px 0 0 9px; font-weight: 300; font-size: 26px; line-height: 38px; color: #3d74ad; }
.pt.act { color: #2e9bee; margin-left: 10px; }
.pa { position: absolute; right: 6px; top: 18px; display: flex; gap: 8px; align-items: center; }
.tri-p { width: 0; height: 0; border: 5px solid transparent; border-top: 6px solid #c9d0d8; border-bottom: 0; }
.pin { width: 6px; height: 12px; background: #c9d0d8; }
.pa.dark .tri-p { border-top-color: #444; }
.pa.dark .pin { background: #444; }
.tri-d { display: block; width: 0; height: 0; border: 4.5px solid transparent; border-top: 6px solid #333; border-bottom: 0; }

.ltb { height: 23px; flex: none; display: flex; align-items: center; padding-left: 11px; margin-top: -3px; margin-bottom: 5px; }
.m2 { margin-left: 15px; } .m3 { margin-left: 19px; } .m4 { margin-left: 19px; } .m5 { margin-left: 18px; } .m6 { margin-left: 10px; }
.m7 { margin-left: 19px; } .m8 { margin-left: 9px; } .m9 { margin-left: 11px; } .m10 { margin-left: 10px; }
.tree { flex: 1; margin: 0 5px; background: #fff; border: 1px solid #d8dbe0; border-bottom: 0; }
.trow { height: 22px; display: flex; align-items: center; font-size: 14.5px; color: #333; white-space: nowrap; }
.trow.sel { background: #d9dade; }
.ar { width: 10px; flex: none; display: flex; justify-content: center; }
.ar-open { width: 0; height: 0; border-style: solid; border-width: 0 0 8px 8px; border-color: transparent transparent #333 transparent; }
.ti { width: 22px; margin-left: 8px; display: flex; justify-content: center; align-items: center; flex: none; }
.tx { margin-left: 6px; margin-top: -2px; }
.tg-i { margin-left: 10px; margin-top: -2px; font-style: italic; font-size: 16.5px; }

.sub { height: 24px; line-height: 24px; font-size: 18px; color: #5cb0f4; padding-left: 8px; }
.stb { height: 24px; display: flex; align-items: center; padding-left: 10px; font-size: 14.5px; color: #333; }
.stb-t1 { margin-left: 10px; margin-right: 10px; }
.s2 { margin-left: 24px; }
.stb-t2 { margin-left: 9px; }
.s3 { margin-left: 12px; margin-top: -5px; }
.frow { display: flex; align-items: center; padding-left: 6px; }
.frow.lblrow { margin-top: 17px; height: 28px; }
.lab { font-size: 15px; color: #333; flex: none; }
.l46 { width: 46px; } .l24 { width: 24px; }
.inp { height: 24px; background: #fff; border: 2px solid #d4d4d4; box-sizing: border-box; padding-left: 3px; line-height: 19px; font-size: 15.4px; flex: none; }
.i524 { width: 524px; margin-right: 11px; }
.i518 { width: 518px; }
.unit { width: 39px; text-align: center; font-size: 15px; }
.sec { height: 32px; background: #dfe8f4; display: flex; align-items: center; font-size: 16px; color: #333; padding-left: 7px; }
.sec .tri-d { margin-right: 16px; }
.sec span { margin-top: -2px; }
.s1 { margin-top: 11px; }
.line { line-height: 20px; height: 20px; margin: 12px 0 0 6px; }
.listrow { display: flex; margin: 8px 0 0 6px; height: 149px; }
.actcol { width: 48px; flex: none; }
.onbtn { height: 49px; box-sizing: border-box; background: linear-gradient(#b0d8fb, #a3d0f8); border: 1px solid #5f8db8; border-radius: 3px; display: flex; justify-content: center; padding-top: 12px; }
.lab.c { text-align: center; margin-top: 4px; }
.listbox { width: 463px; margin-left: 10px; background: #fff; border: 1px solid #cfcfcf; border-bottom-width: 3px; box-sizing: border-box; padding: 1px 0 0 7px; flex: none; }
.obj { height: 25px; line-height: 25px; font-size: 15.6px; }
.sidebtns { display: grid; grid-template-columns: 42px 44px; grid-auto-rows: 24.5px; justify-items: center; align-items: center; margin-left: 8px; height: 74px; }
.chkrow { display: flex; margin: 9px 0 0 8px; height: 17px; align-items: stretch; }
.chk { width: 17px; height: 17px; box-sizing: border-box; border: 1px solid #555; background: #fff; display: flex; align-items: center; justify-content: center; flex: none; }
.chktext { width: 587px; box-sizing: border-box; border: 1px dotted #555; line-height: 15px; padding-left: 5px; font-size: 15px; }
.s2s { margin-top: 15px; }
.xr { margin-top: 12px; height: 28px; }
.yr { margin-top: 8px; height: 28px; }
.s3s { margin-top: 14px; }
.gbox { position: relative; margin: 27px 6px 0 7px; height: 88px; box-sizing: border-box; border: 1px solid #d7dde5; border-radius: 5px; padding: 16px 12px 0 12px; }
.legend { position: absolute; left: 13px; top: -13px; background: #f9fbff; display: flex; align-items: center; gap: 5px; padding: 0 9px 0 4px; font-size: 15px; color: #333; height: 22px; }
.grow { display: flex; align-items: center; height: 24px; }
.g2r { height: 28px; margin-top: 9px; }
.glab { width: 122px; color: #8a8a8a; font-size: 15px; flex: none; white-space: nowrap; margin-top: -2px; }
.gsel { width: 455px; height: 24px; box-sizing: border-box; border: 2px solid #aaa; border-radius: 3px; background: linear-gradient(#f3f3f3, #e3e3e3); color: #999; padding-left: 13px; line-height: 18px; font-size: 15px; position: relative; flex: none; }
.tri-g { position: absolute; right: 5px; top: 8px; width: 0; height: 0; border: 4px solid transparent; border-top: 5px solid #ccc; border-bottom: 0; }
.gcombo { width: 455px; height: 28px; box-sizing: border-box; display: flex; background: #fff; border: 1px solid #8fa3b5; border-radius: 2px; flex: none; font-size: 15px; }
.gcombo span { flex: 1; padding-left: 13px; line-height: 24px; color: #222; }
.gcombo b { width: 19px; background: #fafafa; border-left: 2px solid #607d98; display: flex; justify-content: center; padding-top: 9px; box-sizing: border-box; }
.cum { display: flex; align-items: center; gap: 4px; margin: 4px 6px 0 7px; height: 20px; font-size: 15px; }
.cum i { width: 12px; height: 1px; background: #d4d9e0; }
.cum .grow1 { flex: 1; }
.contrib { margin-top: 3px; align-items: flex-start; }
.csel { width: 477px; height: 25px; margin-top: 4px; box-sizing: border-box; border: 2px solid #aaa; border-radius: 3px; background: linear-gradient(#f6f6f6, #e4e4e4); padding-left: 12px; font-size: 15px; line-height: 19px; position: relative; flex: none; color: #222; }
.csel .tri-d { position: absolute; right: 4px; top: 10px; }
.newbtn { width: 73px; height: 25px; margin-left: 11px; box-sizing: border-box; border: 2px solid #bbb; border-radius: 3px; background: linear-gradient(#f8f8f8, #ececec); text-align: center; line-height: 19px; font-size: 15px; color: #222; flex: none; }
.contrib .lab { margin-top: 5px; }

.gfx { height: 670px; overflow: hidden; }
.gtb { height: 24px; display: flex; align-items: center; padding-left: 3px; margin-top: -2px; }
.gtb.second { margin-top: 1px; }
.gc { width: 28.8px; display: flex; justify-content: center; align-items: center; flex: none; }
.gs { width: 1px; height: 20px; background: #c8ced6; margin: 0 12.6px 0 7.6px; flex: none; }
.gcar { margin: 0 11px 0 4px; }
.plot { display: block; margin-top: 3px; background: #fff; }
.axt { font-family: "Noto Sans", sans-serif; font-size: 16px; fill: #222; }
.glow { filter: blur(1.5px); }
.logo-c { position: absolute; left: 800px; top: 105px; }
.msg { height: 167px; }
.mtabs { display: flex; height: 32px; margin: 6px 5px 0 5px; border-bottom: 1px solid #d6dbe4; gap: 10px; position: relative; }
.mt { background: #eee; font-size: 15.5px; padding: 0 5px; line-height: 30px; height: 31px; width: 34px; text-align: center; color: #222; }
.mt.on { width: 70px; box-sizing: border-box; padding: 0 0 0 6px; height: 33px; background: #fbfdff; color: #3567a8; border: 1px solid #d6dbe4; border-bottom: 0; text-align: left; line-height: 32px; white-space: nowrap; }
.x { color: #c8d2de; margin-left: 7px; font-size: 14px; }
.mpa { top: 11px; right: 1px; }
.mtool { height: 33px; padding: 4px 0 0 8px; box-sizing: border-box; }
.mbox { margin: 0 6px 0 5px; height: 87px; background: #f9fbff; border: 1px solid #d6dbe4; box-sizing: border-box; padding: 1px 0 0 3px; font-size: 15.7px; color: #222; line-height: 20px; }
.status { margin-top: 6px; height: 41px; flex: 1; background: #f0eeee; margin-left: 3px; position: relative; display: flex; align-items: center; }
.mem { position: absolute; left: 1059px; top: 9px; font-size: 15px; color: #222; }
.wm { position: absolute; right: 13px; top: 10px; font-size: 19px; color: #a2a2a2; }
.overlay { position: absolute; left: 0; top: 0; pointer-events: none; }
</style>
